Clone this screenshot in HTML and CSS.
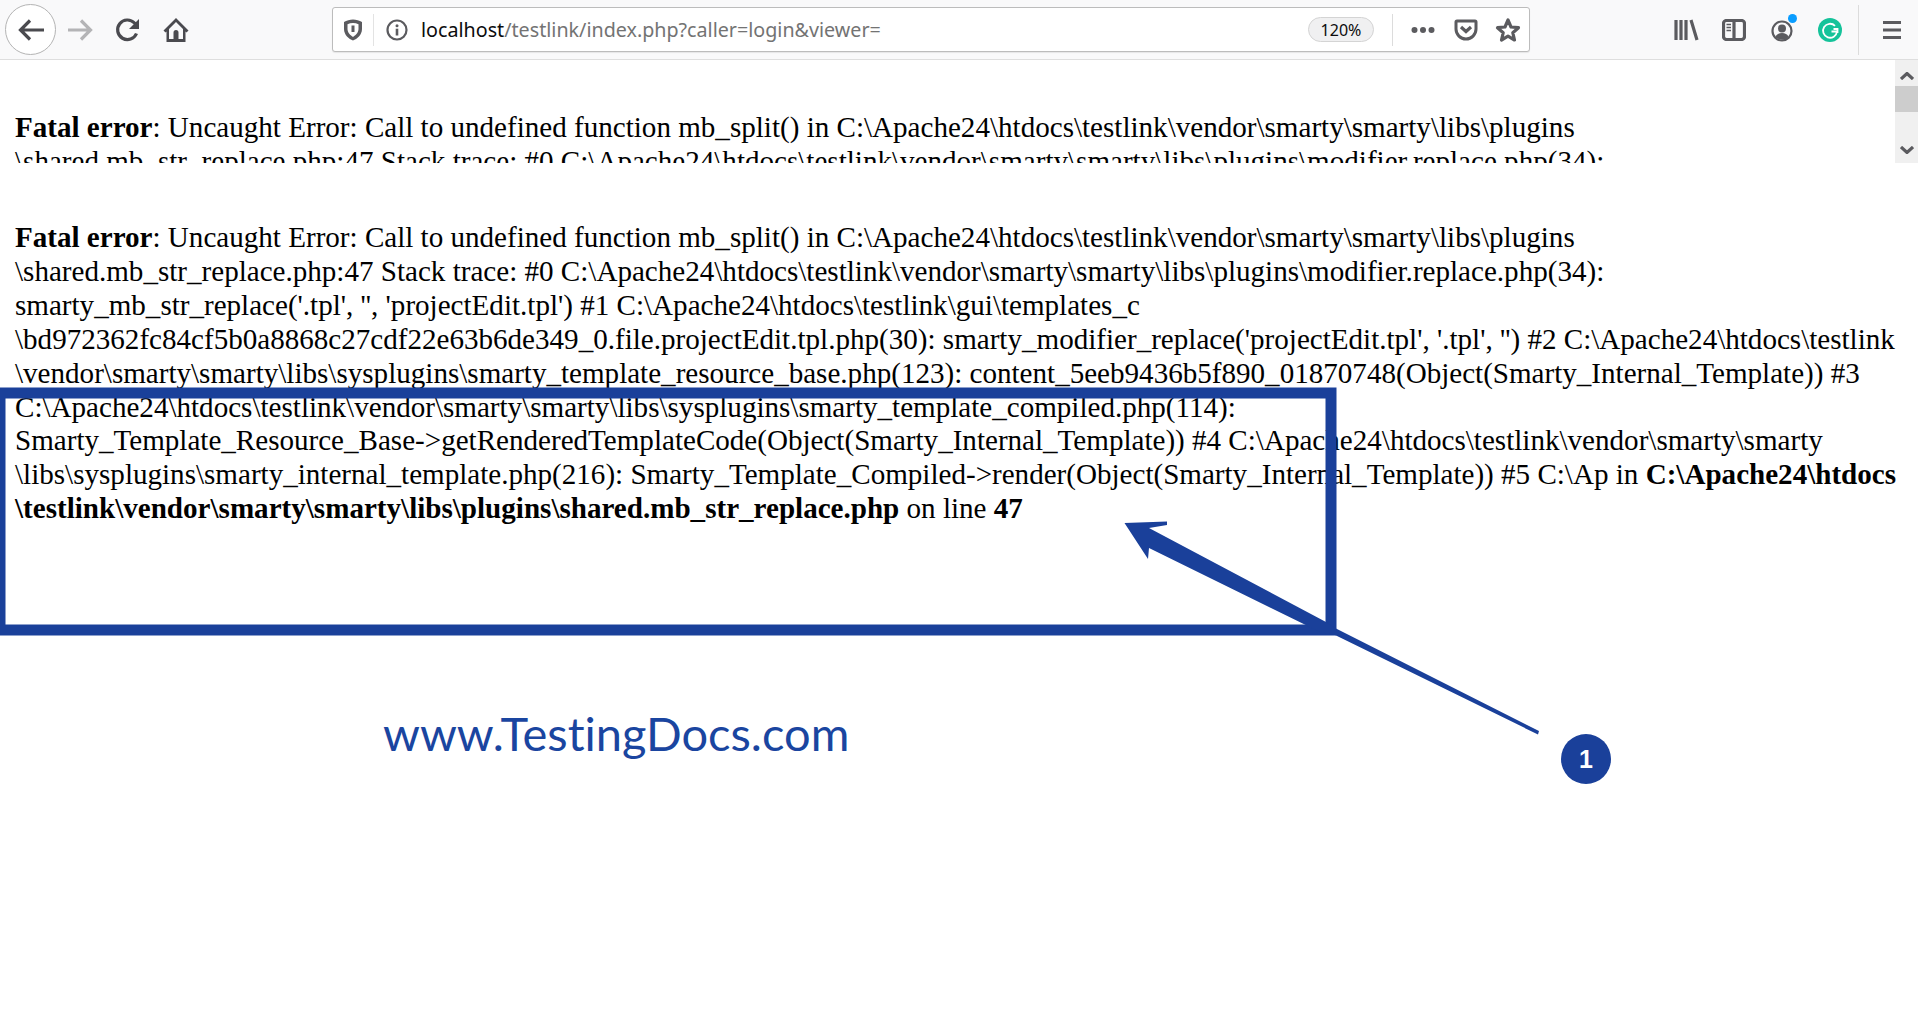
FILE: index.html
```html
<!DOCTYPE html>
<html lang="en">
<head>
<meta charset="utf-8">
<title>TestLink fatal error</title>
<link rel="stylesheet" href="styles.css">
</head>
<body>
<header class="toolbar">
  <div class="nav">
    <span class="back"><svg width="28" height="26" viewBox="0 0 28 26"><path class="stroke dark" d="M27 13H4M13 3.500 3.500 13 13 22.500"/></svg></span>
    <span class="slot"><svg width="28" height="26" viewBox="0 0 28 26"><path class="stroke faint" d="M2 13H25M15 3.500 24.500 13 15 22.500"/></svg></span>
    <span class="slot"><svg width="26" height="26" viewBox="0 0 26 26"><path class="stroke dark" d="M21.500 16.500A9.800 9.800 0 1 1 19.500 6L22.500 9"/><path class="fill dark" d="M24 2v10H14z"/></svg></span>
    <span class="slot"><svg width="26" height="26" viewBox="0 0 26 26"><path class="fill dark" fill-rule="evenodd" d="M13 1 25.500 13.500 23.500 15.500 22.500 14.500V25H3.500V14.500L2.500 15.500.5 13.500ZM13 5 6 12V22H10.500V15.500A2.500 2.500 0 0 1 15.500 15.500V22H20V12Z"/><path class="fill dark" d="M11.500 19.500h3V24h-3z"/></svg></span>
  </div>
  <div class="urlbar">
    <span class="shield"><svg width="20" height="22" viewBox="0 0 20 22"><path class="fill mid" fill-rule="evenodd" d="M10 .5C13 .5 16.500 1.500 19 3V10C19 16 14 20 10 21.500 6 20 1 16 1 10V3C3.500 1.500 7 .5 10 .5ZM10 4C8 4 6.200 4.500 4.500 5.200V10C4.500 13.500 7.500 16.500 10 18 12.500 16.500 15.500 13.500 15.500 10V5.200C13.800 4.500 12 4 10 4Z"/><path class="fill mid" d="M8.500 6.500h3V13h-3z"/></svg></span>
    <span class="info"><svg width="22" height="22" viewBox="0 0 22 22"><circle class="stroke mid thin" cx="11" cy="11" r="9.500"/><circle class="fill mid" cx="11" cy="6.700" r="1.500"/><path class="fill mid" d="M9.700 9.700h2.600v6.800H9.700z"/></svg></span>
    <span class="url"><span class="host">localhost</span>/testlink/index.php?caller=login&amp;viewer=</span>
    <span class="pill">120%</span>
    <span class="vsep"></span>
    <span class="dots"><svg width="24" height="8" viewBox="0 0 24 8"><circle class="fill mid" cx="3.500" cy="4" r="3"/><circle class="fill mid" cx="12" cy="4" r="3"/><circle class="fill mid" cx="20.500" cy="4" r="3"/></svg></span>
    <span class="url-icon"><svg width="24" height="22" viewBox="0 0 24 22"><path class="fill mid" fill-rule="evenodd" d="M3 .5H21A2.500 2.500 0 0 1 23.500 3V10A11.500 11.500 0 0 1 .5 10V3A2.500 2.500 0 0 1 3 .5ZM3.500 3.500V10A8.500 8.500 0 0 0 20.500 10V3.500Z"/><path class="stroke mid" d="M7 8 12 12.500 17 8"/></svg></span>
    <span class="url-icon"><svg width="26" height="26" viewBox="0 0 26 26"><path class="stroke mid" stroke-linejoin="round" d="M13 3 16 10 23.500 10.700 17.800 15.700 19.500 23 13 19.200 6.500 23 8.200 15.700 2.500 10.700 10 10Z"/></svg></span>
  </div>
  <div class="tools">
    <span class="slot"><svg width="26" height="22" viewBox="0 0 26 22"><path class="stroke mid" d="M3 1V21M8 1V21M13 1V21M18 1 24 21"/></svg></span>
    <span class="slot"><svg width="24" height="22" viewBox="0 0 24 22"><rect class="stroke mid" x="1.500" y="1.500" width="21" height="19" rx="3"/><path class="stroke mid" d="M12 1.500V20.500"/><path class="stroke mid hair" d="M4.500 5.500H9M4.500 8.500H9M4.500 11.500H9"/></svg></span>
    <span class="slot account"><svg width="24" height="24" viewBox="0 0 24 24"><circle class="stroke mid thin" cx="12" cy="13" r="9.500"/><circle class="fill mid" cx="12" cy="10.500" r="4"/><path class="fill mid" d="M5.500 19C6.500 16 9 15 12 15S17.500 16 18.500 19C16 22.500 8 22.500 5.500 19Z"/></svg><i class="notify"></i></span>
    <span class="slot"><svg width="24" height="24" viewBox="0 0 24 24"><circle cx="12" cy="12" r="12" fill="#15c39a"/><path d="M17 7.800A7 7 0 1 0 19 13.500H13.500" fill="none" stroke="#fff" stroke-width="1.800"/><path d="M15.500 11H19.500V15" fill="none" stroke="#fff" stroke-width="1.800"/></svg></span>
    <span class="vsep tall"></span>
    <span class="slot menu"><svg width="18" height="18" viewBox="0 0 18 18"><path class="stroke mid" d="M0 1.500H18M0 9H18M0 16.500H18"/></svg></span>
  </div>
</header>

<section class="frame">
  <div class="frame-body">
    <p class="error"><b>Fatal error</b>: Uncaught Error: Call to undefined function mb_split() in C:\Apache24\htdocs\testlink\vendor\smarty\smarty\libs\plugins<br>\shared.mb_str_replace.php:47 Stack trace: #0 C:\Apache24\htdocs\testlink\vendor\smarty\smarty\libs\plugins\modifier.replace.php(34):</p>
  </div>
  <div class="scrollbar">
    <svg class="chev" width="14" height="8" viewBox="0 0 14 8"><path class="stroke mid" d="M1 7 7 1.500 13 7"/></svg>
    <span class="thumb"></span>
    <svg class="chev down" width="14" height="8" viewBox="0 0 14 8"><path class="stroke mid" d="M1 1 7 6.500 13 1"/></svg>
  </div>
</section>

<main class="report">
  <p class="error"><b>Fatal error</b>: Uncaught Error: Call to undefined function mb_split() in C:\Apache24\htdocs\testlink\vendor\smarty\smarty\libs\plugins<br>\shared.mb_str_replace.php:47 Stack trace: #0 C:\Apache24\htdocs\testlink\vendor\smarty\smarty\libs\plugins\modifier.replace.php(34):<br>smarty_mb_str_replace('.tpl', '', 'projectEdit.tpl') #1 C:\Apache24\htdocs\testlink\gui\templates_c<br>\bd972362fc84cf5b0a8868c27cdf22e63b6de349_0.file.projectEdit.tpl.php(30): smarty_modifier_replace('projectEdit.tpl', '.tpl', '') #2 C:\Apache24\htdocs\testlink<br>\vendor\smarty\smarty\libs\sysplugins\smarty_template_resource_base.php(123): content_5eeb9436b5f890_01870748(Object(Smarty_Internal_Template)) #3<br>C:\Apache24\htdocs\testlink\vendor\smarty\smarty\libs\sysplugins\smarty_template_compiled.php(114):<br>Smarty_Template_Resource_Base-&gt;getRenderedTemplateCode(Object(Smarty_Internal_Template)) #4 C:\Apache24\htdocs\testlink\vendor\smarty\smarty<br>\libs\sysplugins\smarty_internal_template.php(216): Smarty_Template_Compiled-&gt;render(Object(Smarty_Internal_Template)) #5 C:\Ap in <b>C:\Apache24\htdocs<br>\testlink\vendor\smarty\smarty\libs\plugins\shared.mb_str_replace.php</b> on line <b>47</b></p>
  <p class="watermark">www.TestingDocs.com</p>
</main>

<svg class="annotation" width="1918" height="1016" viewBox="0 0 1918 1016">
  <rect class="anno-box" x="0" y="393" width="1331" height="237"/>
  <path class="anno-fill" d="M1124.500 523 1167 521.500 1167 525 1149 528 1326 622 1335 628 1539 731 1538 734.500 1335 635 1320 632 1149 548 1148 559Z"/>
  <circle class="anno-fill" cx="1586" cy="759" r="25"/>
  <text class="anno-num" x="1586" y="768">1</text>
</svg>
</body>
</html>
```

FILE: styles.css
```css
* { box-sizing: border-box; }
html, body { margin: 0; padding: 0; background: #fff; }
body { position: relative; width: 1918px; height: 1016px; overflow: hidden; }

.toolbar {
  display: flex;
  align-items: center;
  height: 60px;
  padding-left: 5px;
  background: #f9f9fa;
  border-bottom: 1px solid #dedede;
}
.nav { display: flex; align-items: center; }
.back {
  display: flex;
  align-items: center;
  justify-content: center;
  width: 51px;
  height: 51px;
  background: #fff;
  border: 1px solid #b4b4b4;
  border-radius: 50%;
}
.slot {
  position: relative;
  display: flex;
  align-items: center;
  justify-content: center;
  width: 48px;
  height: 44px;
}
.urlbar {
  display: flex;
  align-items: center;
  width: 1198px;
  height: 45px;
  margin-left: 132px;
  background: #fff;
  border: 1px solid #bcbcbc;
  border-radius: 3px;
  box-shadow: 0 1px 1px rgba(0, 0, 0, .08);
}
.shield {
  display: flex;
  justify-content: center;
  width: 41px;
  height: 32px;
  align-items: center;
  border-right: 1px solid #e3e3e3;
}
.info { display: flex; width: 47px; justify-content: center; padding-right: 1px; }
.url {
  flex: 1;
  font-family: "Noto Sans", sans-serif;
  font-size: 19.700px;
  color: #737373;
  white-space: nowrap;
}
.host { color: #0c0c0d; }
.pill {
  display: flex;
  align-items: center;
  justify-content: center;
  width: 66px;
  height: 25px;
  background: #f0f0f1;
  border: 1px solid #d4d4d4;
  border-radius: 13px;
  font-family: "Noto Sans", sans-serif;
  font-size: 16px;
  color: #0c0c0d;
}
.vsep { width: 1px; height: 32px; margin: 0 18px 0 18px; background: #dcdcdc; }
.dots { display: flex; width: 24px; }
.url-icon { display: flex; width: 42px; justify-content: center; }
.dots + .url-icon { margin-left: 10px; }
.tools { display: flex; align-items: center; margin-left: 132px; }
.vsep.tall { height: 50px; margin: 0 8px 0 4px; }
.menu { margin-left: 1px; }
.notify {
  position: absolute;
  top: 6px;
  right: 9px;
  width: 9px;
  height: 9px;
  background: #0a9dff;
  border-radius: 50%;
}

.stroke { fill: none; stroke-width: 3.200; }
.stroke.thin { stroke-width: 2.200; }
.stroke.hair { stroke-width: 1.500; }
.stroke.dark { stroke: #4a4a4f; }
.stroke.faint { stroke: #b4b4b6; }
.stroke.mid { stroke: #5b5b5f; }
.fill.dark { fill: #4a4a4f; }
.fill.mid { fill: #5b5b5f; }

.frame { display: flex; height: 103px; overflow: hidden; }
.frame-body { flex: 1; padding: 51px 0 0 15px; overflow: hidden; }
.scrollbar {
  display: flex;
  flex-direction: column;
  align-items: center;
  width: 23px;
  background: #f0f0f0;
}
.chev { margin-top: 12px; flex: none; }
.thumb { width: 100%; height: 26px; margin-top: 6px; background: #cdcdcd; }
.chev.down { margin-top: 34px; }

.error {
  margin: 0;
  font-family: "Liberation Serif", "Times New Roman", serif;
  font-size: 29.090px;
  line-height: 33.900px;
  color: #000;
  white-space: nowrap;
}
.report { padding: 58px 0 0 15px; }
.watermark {
  margin: 177px 0 0 368px;
  font-family: "Lato", sans-serif;
  font-size: 47px;
  font-variant-ligatures: none;
  line-height: 60px;
  color: #1a45a0;
}

.annotation { position: absolute; left: 0; top: 0; pointer-events: none; }
.anno-box { fill: none; stroke: #1a409a; stroke-width: 11px; }
.anno-fill { fill: #1a409a; }
.anno-num {
  fill: #fff;
  font-family: "Liberation Sans", sans-serif;
  font-size: 25px;
  font-weight: 700;
  text-anchor: middle;
}
```
